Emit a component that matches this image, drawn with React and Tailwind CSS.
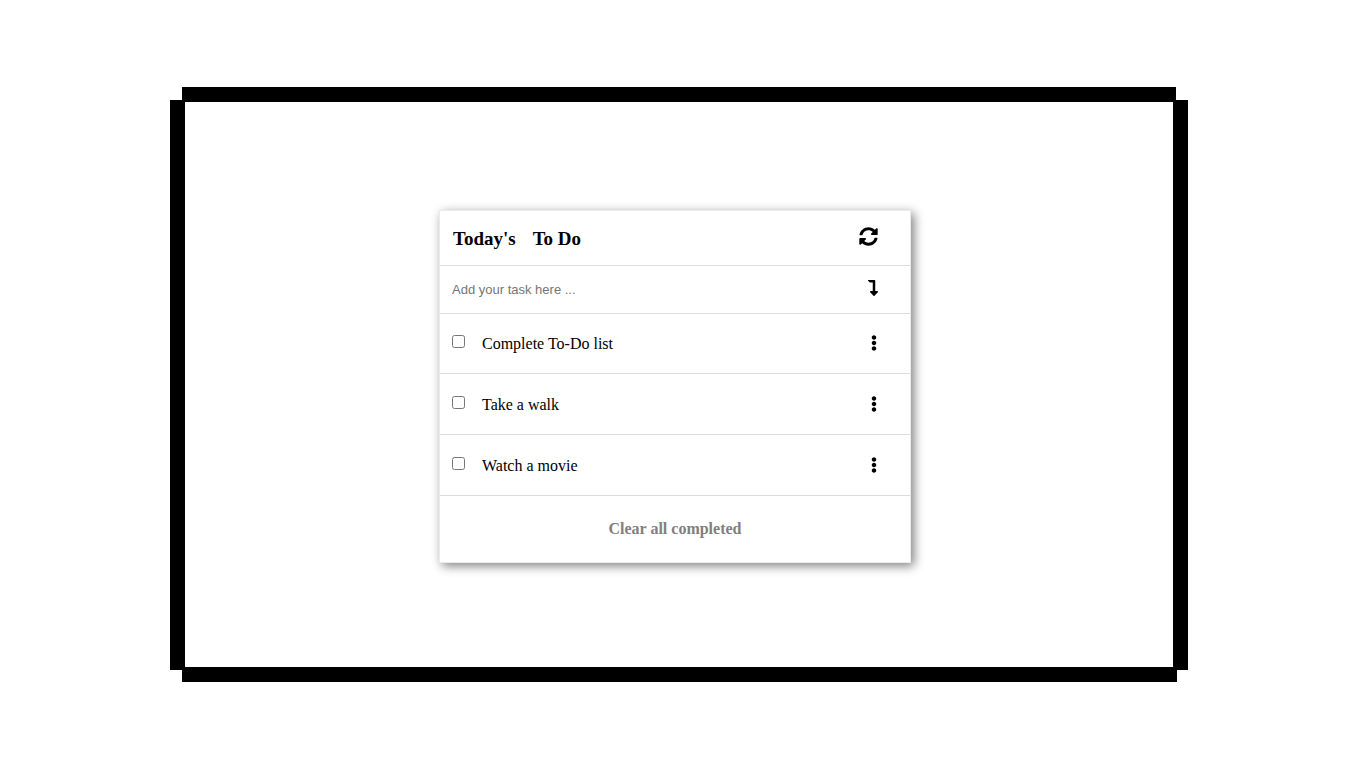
import React, { useState } from 'react';
import { FaSyncAlt, FaLevelDownAlt, FaEllipsisV } from 'react-icons/fa';

const initialTasks = [
  { id: 1, text: 'Complete To-Do list', done: false },
  { id: 2, text: 'Take a walk', done: false },
  { id: 3, text: 'Watch a movie', done: false },
];

function IconButton({ label, type = 'button', onClick, children }) {
  return (
    <button type={type} aria-label={label} onClick={onClick} className="flex shrink-0 items-center justify-end">
      {children}
    </button>
  );
}

function Task({ task, onToggle }) {
  const id = `task-${task.id}`;
  return (
    <li className="flex h-[61px] items-center border-b border-[#dcdcdc] pl-3 pr-7">
      <input id={id} type="checkbox" checked={task.done} onChange={onToggle} className="mb-[3px] size-[13px]" />
      <label htmlFor={id} className="ml-[17px] flex-1 pt-px text-base leading-5">
        {task.text}
      </label>
      <IconButton label={`Options for ${task.text}`}>
        <FaEllipsisV size={16} />
      </IconButton>
    </li>
  );
}

export default function App() {
  const [tasks, setTasks] = useState(initialTasks);
  const [draft, setDraft] = useState('');

  const addTask = (event) => {
    event.preventDefault();
    if (!draft.trim()) return;
    setTasks([...tasks, { id: Date.now(), text: draft.trim(), done: false }]);
    setDraft('');
  };
  const toggle = (id) => setTasks(tasks.map((t) => (t.id === id ? { ...t, done: !t.done } : t)));

  return (
    <div className="flex min-h-screen flex-col bg-white pt-[87px] pr-[178px] pb-[86px] pl-[170px] font-['Liberation_Serif',serif] text-black">
      <div className="mx-3 h-[15px] bg-black" />
      <main className="-mt-0.5 flex flex-1 items-center justify-center border-x-[15px] border-black pt-[3px] pr-2">
        <section className="w-full max-w-[472px] border border-[#ebebeb] bg-white shadow-[3px_3px_10px_#808080]">
          <header className="flex h-[55px] items-center justify-between border-b border-[#dcdcdc] pr-8 pl-[13px]">
            <h1 className="flex gap-[17px] pt-px text-[19px] leading-6 font-bold">
              <span>Today&apos;s</span>
              <span>To Do</span>
            </h1>
            <div className="pb-1">
              <IconButton label="Refresh">
                <FaSyncAlt size={19} />
              </IconButton>
            </div>
          </header>
          <form onSubmit={addTask} className="flex h-12 items-center border-b border-[#dcdcdc] pr-[29px] pl-3">
            <input
              type="text"
              aria-label="New task"
              placeholder="Add your task here ..."
              value={draft}
              onChange={(event) => setDraft(event.target.value)}
              className="min-w-0 flex-1 font-['Liberation_Sans',sans-serif] text-[13px] leading-4 outline-none placeholder:text-[#757575]"
            />
            <div className="pb-[3px]">
              <IconButton label="Add task" type="submit">
                <FaLevelDownAlt size={16} />
              </IconButton>
            </div>
          </form>
          <ul className="-mt-px">
            {tasks.map((task) => (
              <Task key={task.id} task={task} onToggle={() => toggle(task.id)} />
            ))}
          </ul>
          <button
            type="button"
            onClick={() => setTasks(tasks.filter((t) => !t.done))}
            className="h-[66px] w-full text-base font-bold text-[#808080]"
          >
            Clear all completed
          </button>
        </section>
      </main>
      <div className="-mt-[3px] mr-[11px] ml-3 h-[15px] bg-black" />
    </div>
  );
}
